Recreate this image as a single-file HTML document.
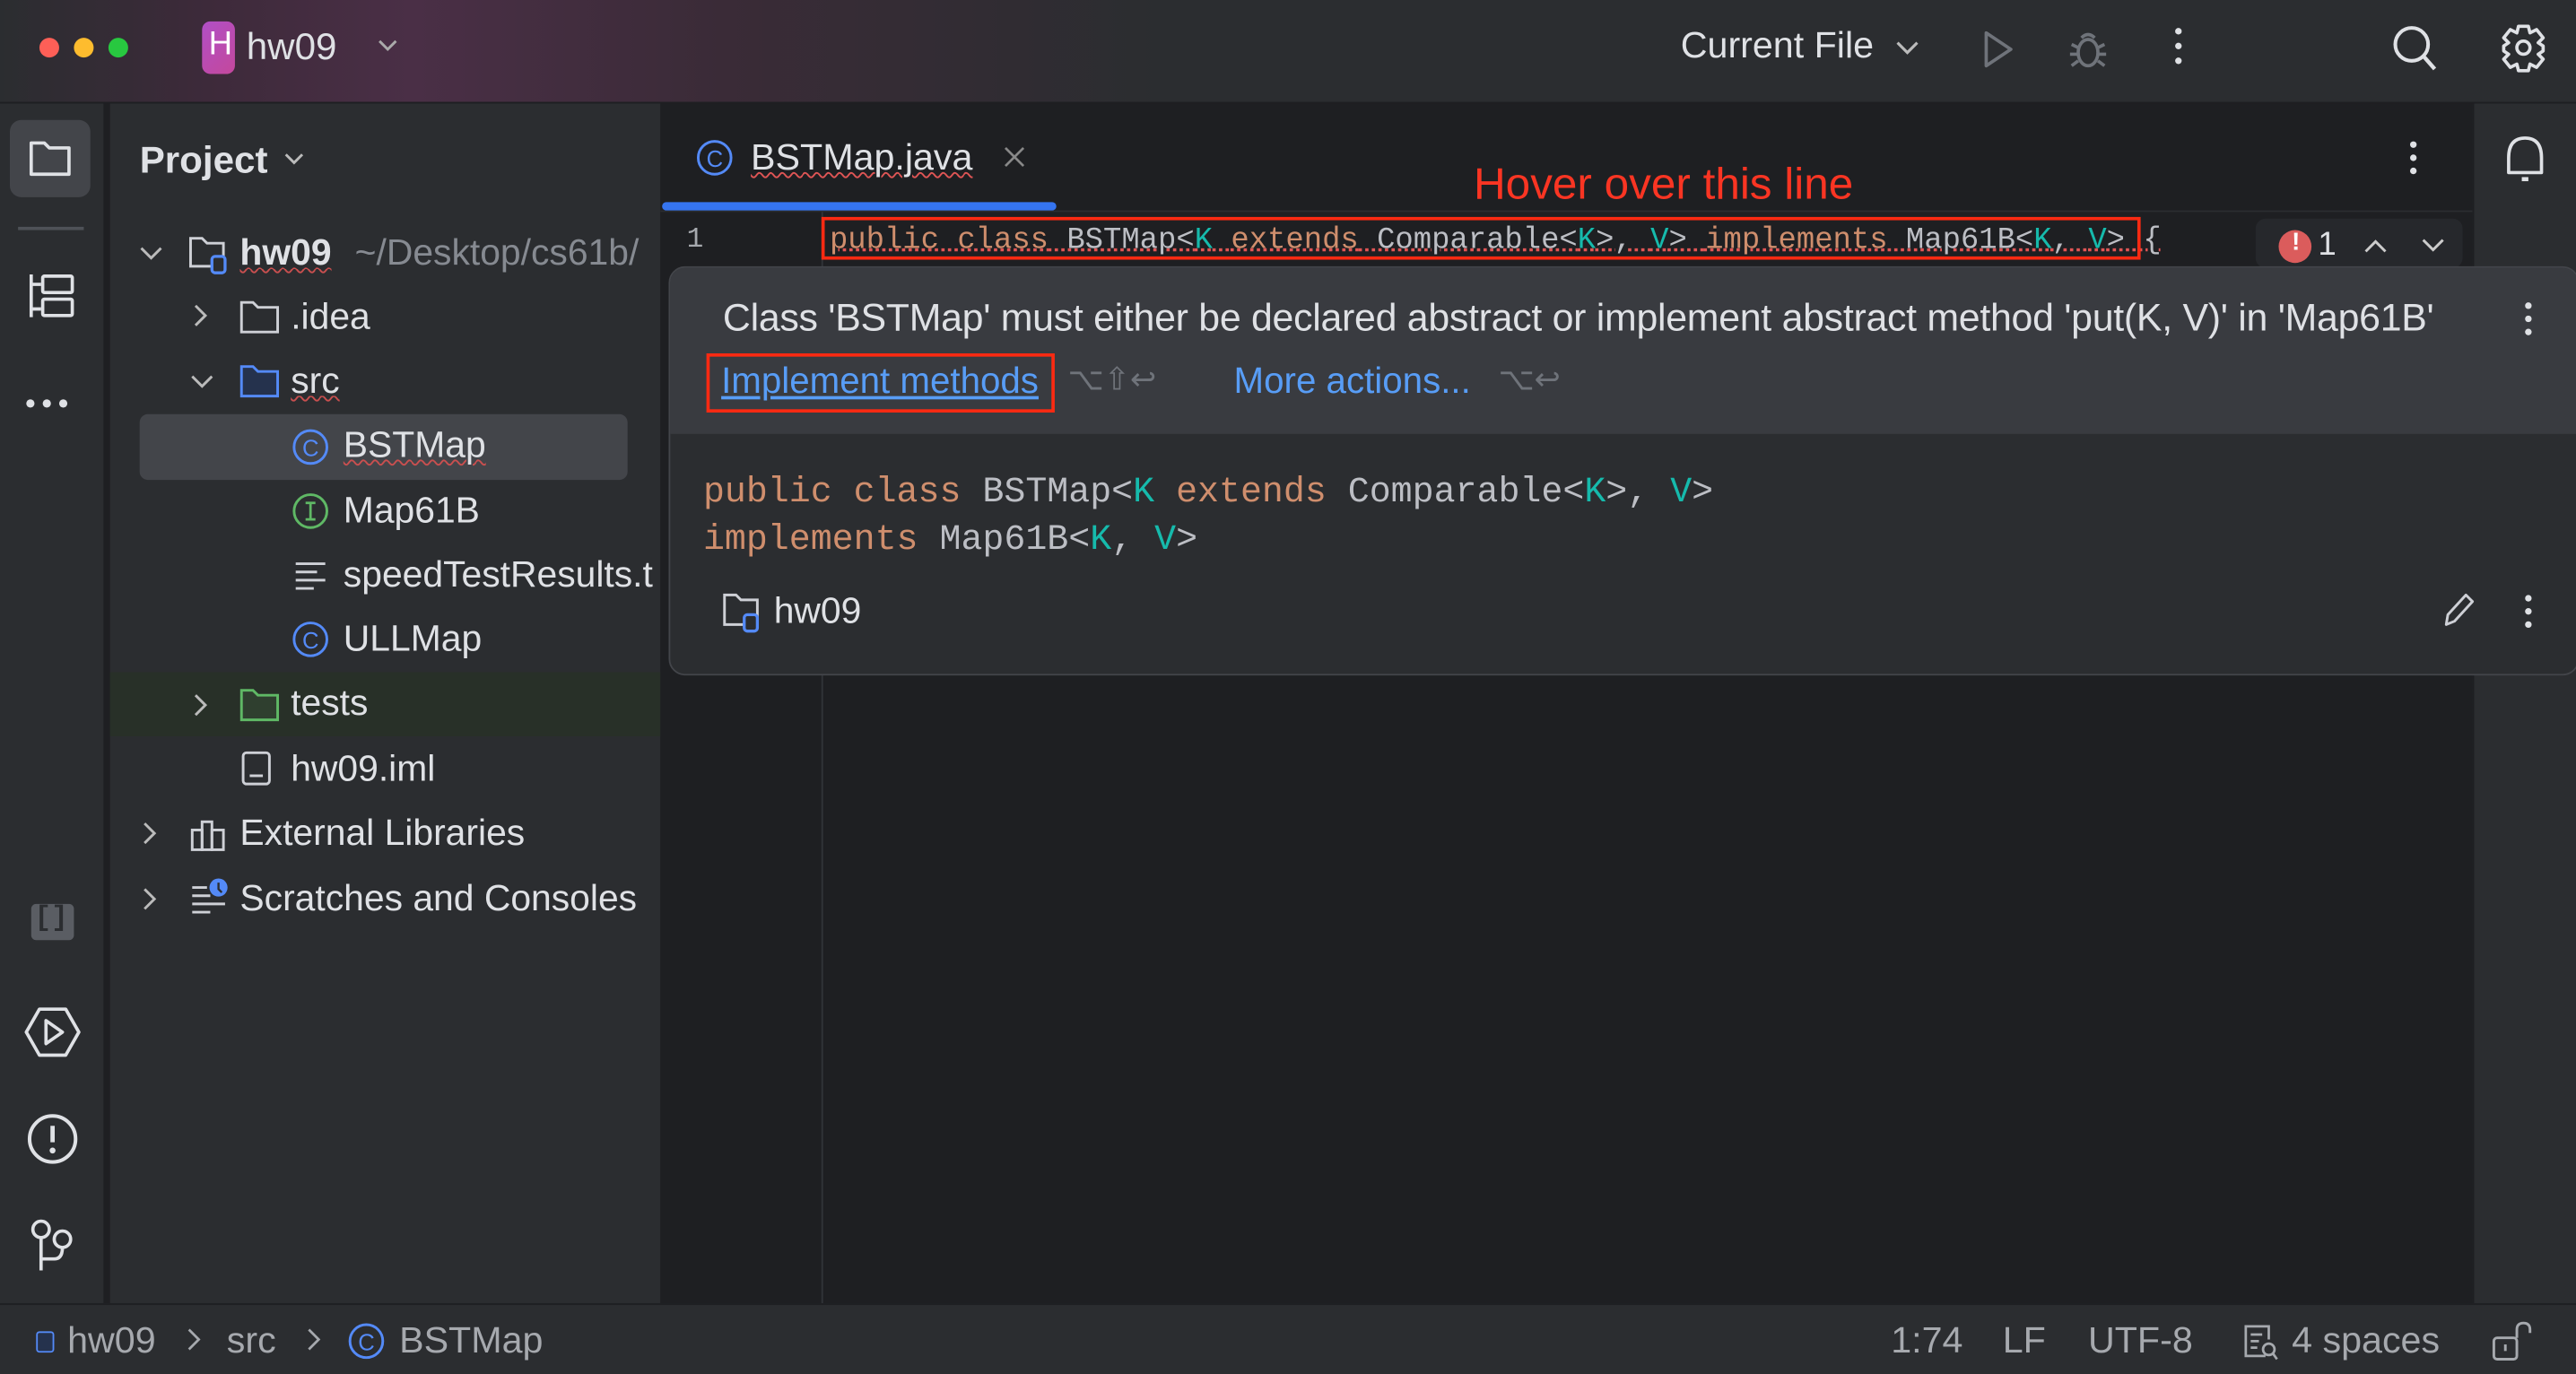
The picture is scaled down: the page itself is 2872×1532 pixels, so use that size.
<!DOCTYPE html>
<html><head><meta charset="utf-8"><style>
*{margin:0;padding:0;box-sizing:border-box}
html,body{width:2872px;height:1532px;overflow:hidden;background:#1e1f22}
#w{position:absolute;left:0;top:0;width:1568px;height:836px;transform:scale(1.83163,1.83254);transform-origin:0 0;font-family:"Liberation Sans",sans-serif;color:#dfe1e5;background:#1e1f22}
.a{position:absolute}
.t{position:absolute;white-space:nowrap}
.m{font-family:"Liberation Mono","DejaVu Sans Mono",monospace}
.kw{color:#cf8e6d}.tp{color:#16baac}
svg{position:absolute;overflow:visible}
.tr{font-size:22.3px}
</style></head><body><div id="w">
<div class="a" style="left:0;top:0;width:1568px;height:62px;background:linear-gradient(90deg,#2b2d30 0,#3d2a3a 8%,#4a2f46 16%,#3a2b37 28%,#2b2d30 45%)"></div>
<div class="a" style="left:0;top:62px;width:1568px;height:1px;background:#1e1f22"></div>
<div class="a" style="left:24px;top:23px;width:12px;height:12px;border-radius:50%;background:#fe5f57"></div>
<div class="a" style="left:45px;top:23px;width:12px;height:12px;border-radius:50%;background:#febc2e"></div>
<div class="a" style="left:66px;top:23px;width:12px;height:12px;border-radius:50%;background:#28c840"></div>
<div class="a" style="left:123px;top:13px;width:20px;height:32px;border-radius:5px;background:linear-gradient(135deg,#b04fc6,#c4489c)"></div>
<div class="t" style="left:127px;top:16px;font-size:20px;color:#fff">H</div>
<div class="t" style="left:150px;top:15px;font-size:23px;color:#dfe1e5">hw09</div>
<svg style="left:230px;top:24px" width="12" height="8"><path d="M1 1 L6 6 L11 1" stroke="#aaa" stroke-width="1.6" fill="none"/></svg>
<div class="t" style="left:1023px;top:15px;font-size:22.5px">Current File</div>
<svg style="left:1154px;top:25px" width="14" height="9"><path d="M1 1 L7 7 L13 1" stroke="#bbb" stroke-width="1.7" fill="none"/></svg>
<svg style="left:1207px;top:18px" width="20" height="24"><path d="M2 2 L17 12 L2 22 Z" stroke="#6f737a" stroke-width="2" fill="none" stroke-linejoin="round"/></svg>
<svg style="left:1258px;top:16px" width="26" height="28"><ellipse cx="13" cy="16" rx="6" ry="8" stroke="#6f737a" stroke-width="2" fill="none"/><path d="M9 7 Q13 3 17 7 M3 11 L7 13 M23 11 L19 13 M2 17 L7 17 M24 17 L19 17 M3 24 L7 21 M23 24 L19 21" stroke="#6f737a" stroke-width="2" fill="none"/></svg>
<div class="a" style="left:1324px;top:17px;width:4px;height:4px;border-radius:50%;background:#dfe1e5;box-shadow:0 9px 0 #dfe1e5,0 18px 0 #dfe1e5"></div>
<svg style="left:1456px;top:15px" width="30" height="30"><circle cx="12" cy="12" r="10" stroke="#dfe1e5" stroke-width="2.2" fill="none"/><path d="M19 19 L26 27" stroke="#dfe1e5" stroke-width="2.4"/></svg>
<svg style="left:1521px;top:14px" width="30" height="30"><circle cx="15" cy="15" r="4" stroke="#dfe1e5" stroke-width="2" fill="none"/><path d="M12 2 h6 l1 4 l4 -2 l4 5 l-3 3 l3 2 v3 l-3 2 l3 3 l-4 5 l-4 -2 l-1 4 h-6 l-1 -4 l-4 2 l-4 -5 l3 -3 l-3 -2 v-3 l3 -2 l-3 -3 l4 -5 l4 2 z" stroke="#dfe1e5" stroke-width="2" fill="none" stroke-linejoin="round"/></svg>

<div class="a" style="left:0;top:63px;width:65px;height:730px;background:#2b2d30;border-right:2px solid #1e1f22"></div>
<div class="a" style="left:6px;top:73px;width:49px;height:47px;border-radius:7px;background:#43454a"></div>
<svg style="left:17px;top:84px" width="28" height="26"><path d="M2 3 h8 l3 3 h12 v16 h-23 z" stroke="#dfe1e5" stroke-width="2" fill="none" stroke-linejoin="round"/></svg>
<div class="a" style="left:11px;top:138px;width:40px;height:2px;background:#4e5157"></div>
<svg style="left:17px;top:165px" width="30" height="30"><path d="M2 2 V28 M2 8 H8 M2 23 H8" stroke="#dfe1e5" stroke-width="2" fill="none"/><rect x="9" y="3" width="18" height="10" rx="1" stroke="#dfe1e5" stroke-width="2" fill="none"/><rect x="9" y="17" width="18" height="10" rx="1" stroke="#dfe1e5" stroke-width="2" fill="none"/></svg>
<div class="a" style="left:16px;top:243px;width:5px;height:5px;border-radius:50%;background:#dfe1e5;box-shadow:10px 0 0 #dfe1e5,20px 0 0 #dfe1e5"></div>
<div class="a" style="left:19px;top:550px;width:26px;height:22px;border-radius:3px;background:#5a5d63"></div>
<div class="t m" style="left:21px;top:550px;font-size:17px;color:#2b2d30;font-weight:bold">[]</div>
<svg style="left:15px;top:612px" width="34" height="32"><path d="M9 2 h16 l8 14 l-8 14 h-16 l-8 -14 z" stroke="#dfe1e5" stroke-width="2" fill="none" stroke-linejoin="round"/><path d="M13 9 L23 16 L13 23 Z" stroke="#dfe1e5" stroke-width="2" fill="none" stroke-linejoin="round"/></svg>
<svg style="left:16px;top:677px" width="32" height="32"><circle cx="16" cy="16" r="14" stroke="#dfe1e5" stroke-width="2.2" fill="none"/><path d="M16 8 V18" stroke="#dfe1e5" stroke-width="2.6"/><circle cx="16" cy="23" r="1.8" fill="#dfe1e5"/></svg>
<svg style="left:17px;top:742px" width="30" height="32"><circle cx="8" cy="6" r="5" stroke="#dfe1e5" stroke-width="2" fill="none"/><circle cx="21" cy="12" r="5" stroke="#dfe1e5" stroke-width="2" fill="none"/><path d="M8 11 V31 M8 24 H16 Q21 24 21 17" stroke="#dfe1e5" stroke-width="2" fill="none"/></svg>

<div class="a" style="left:67px;top:63px;width:335px;height:730px;background:#2b2d30"></div>
<div class="t" style="left:85px;top:84px;font-size:23px;font-weight:bold;color:#dfe1e5">Project</div>
<svg style="left:173px;top:93px" width="12" height="8"><path d="M1 1 L6 6 L11 1" stroke="#bbb" stroke-width="1.6" fill="none"/></svg>
<div class="a" style="left:67px;top:409px;width:335px;height:39px;background:#283028"></div>
<div class="a" style="left:85px;top:252px;width:297px;height:40px;border-radius:5px;background:#43454a"></div>
<svg style="left:85px;top:150px" width="14" height="9"><path d="M1 1 L7 7 L13 1" stroke="#bbb" stroke-width="1.6" fill="none"/></svg>
<svg style="left:118px;top:185px" width="9" height="14"><path d="M1 1 L7 7 L1 13" stroke="#bbb" stroke-width="1.6" fill="none"/></svg>
<svg style="left:116px;top:228px" width="14" height="9"><path d="M1 1 L7 7 L13 1" stroke="#bbb" stroke-width="1.6" fill="none"/></svg>
<svg style="left:118px;top:422px" width="9" height="14"><path d="M1 1 L7 7 L1 13" stroke="#bbb" stroke-width="1.6" fill="none"/></svg>
<svg style="left:87px;top:500px" width="9" height="14"><path d="M1 1 L7 7 L1 13" stroke="#bbb" stroke-width="1.6" fill="none"/></svg>
<svg style="left:87px;top:540px" width="9" height="14"><path d="M1 1 L7 7 L1 13" stroke="#bbb" stroke-width="1.6" fill="none"/></svg>
<svg style="left:115px;top:143px" width="26" height="24"><path d="M1 2 h7 l3 3 h10 v14 h-20 z" stroke="#ced0d6" stroke-width="1.6" fill="none"/><rect x="14" y="13" width="8" height="10" rx="2" fill="#2b2d30" stroke="#548af7" stroke-width="1.8"/></svg>
<div class="t tr" style="left:146px;top:141px;font-weight:bold;color:#dfe1e5;text-decoration:underline wavy #c94f4f;text-decoration-thickness:1px">hw09</div>
<div class="t tr" style="left:216px;top:141px;color:#868a91">~/Desktop/cs61b/</div>
<svg style="left:146px;top:182px" width="26" height="22"><path d="M1 2 h7 l3 3 h12 v15 h-22 z" stroke="#ced0d6" stroke-width="1.6" fill="none"/></svg>
<div class="t tr" style="left:177px;top:180px">.idea</div>
<svg style="left:146px;top:221px" width="26" height="22"><path d="M1 2 h7 l3 3 h12 v15 h-22 z" stroke="#548af7" stroke-width="1.6" fill="#25324d"/></svg>
<div class="t tr" style="left:177px;top:219px;text-decoration:underline wavy #c94f4f;text-decoration-thickness:1px">src</div>
<svg style="left:178px;top:261px" width="24" height="24"><circle cx="11" cy="11" r="10" stroke="#548af7" stroke-width="1.6" fill="none"/><text x="6" y="16.5" font-size="14" fill="#548af7" font-family="Liberation Sans">C</text></svg>
<div class="t tr" style="left:209px;top:258px;text-decoration:underline wavy #c94f4f;text-decoration-thickness:1px">BSTMap</div>
<svg style="left:178px;top:300px" width="24" height="24"><circle cx="11" cy="11" r="10" stroke="#5fb865" stroke-width="1.6" fill="none"/><path d="M8 6 H14 M11 6 V16 M8 16 H14" stroke="#5fb865" stroke-width="1.5"/></svg>
<div class="t tr" style="left:209px;top:298px">Map61B</div>
<svg style="left:179px;top:341px" width="22" height="20"><path d="M1 2 H19 M1 7 H14 M1 12 H19 M1 17 H12" stroke="#ced0d6" stroke-width="1.6"/></svg>
<div class="t tr" style="left:209px;top:337px">speedTestResults.t</div>
<svg style="left:178px;top:378px" width="24" height="24"><circle cx="11" cy="11" r="10" stroke="#548af7" stroke-width="1.6" fill="none"/><text x="6" y="16.5" font-size="14" fill="#548af7" font-family="Liberation Sans">C</text></svg>
<div class="t tr" style="left:209px;top:376px">ULLMap</div>
<svg style="left:146px;top:418px" width="26" height="22"><path d="M1 2 h7 l3 3 h12 v15 h-22 z" stroke="#5fb865" stroke-width="1.6" fill="#2f3f2f"/></svg>
<div class="t tr" style="left:177px;top:415px">tests</div>
<svg style="left:147px;top:457px" width="20" height="22"><rect x="1" y="1" width="16" height="19" rx="2" stroke="#ced0d6" stroke-width="1.6" fill="none"/><path d="M5 15 H13" stroke="#ced0d6" stroke-width="1.6"/></svg>
<div class="t tr" style="left:177px;top:455px">hw09.iml</div>
<svg style="left:116px;top:497px" width="24" height="22"><rect x="1" y="8" width="6" height="12" stroke="#ced0d6" stroke-width="1.6" fill="none"/><rect x="7" y="3" width="6" height="17" stroke="#ced0d6" stroke-width="1.6" fill="none"/><rect x="13" y="8" width="7" height="12" stroke="#ced0d6" stroke-width="1.6" fill="none"/></svg>
<div class="t tr" style="left:146px;top:494px">External Libraries</div>
<svg style="left:116px;top:534px" width="28" height="24"><path d="M1 6 H10 M1 11 H12 M1 16 H21 M1 21 H12" stroke="#ced0d6" stroke-width="1.6"/><circle cx="17" cy="6" r="5.5" fill="#548af7"/><path d="M17 3 V7 L19 9" stroke="#2b2d30" stroke-width="1.3" fill="none"/></svg>
<div class="t tr" style="left:146px;top:534px">Scratches and Consoles</div>

<div class="a" style="left:402px;top:63px;width:1103px;height:730px;background:#1e1f22"></div>
<div class="a" style="left:402px;top:128px;width:1103px;height:1px;background:#2b2d30"></div>
<div class="a" style="left:403px;top:123px;width:240px;height:5px;border-radius:3px;background:#3574f0"></div>
<svg style="left:424px;top:85px" width="24" height="24"><circle cx="11" cy="11" r="10" stroke="#548af7" stroke-width="1.6" fill="none"/><text x="6" y="16.5" font-size="14" fill="#548af7" font-family="Liberation Sans">C</text></svg>
<div class="t" style="left:457px;top:83px;font-size:22.5px;text-decoration:underline wavy #e05555;text-decoration-thickness:1px">BSTMap.java</div>
<svg style="left:611px;top:89px" width="14" height="14"><path d="M1 1 L12 12 M12 1 L1 12" stroke="#888" stroke-width="1.5"/></svg>
<div class="a" style="left:1467px;top:86px;width:4px;height:4px;border-radius:50%;background:#dfe1e5;box-shadow:0 8px 0 #dfe1e5,0 16px 0 #dfe1e5"></div>
<div class="t" style="left:897px;top:97px;font-size:27px;color:#fa3523">Hover over this line</div>
<div class="a" style="left:500px;top:129px;width:1px;height:664px;background:#313438"></div>
<div class="t m" style="left:418px;top:137px;font-size:17px;color:#a6a9ae">1</div>
<div class="t m" style="left:505px;top:136px;font-size:18.5px;color:#bcbec4;text-decoration:underline dotted #e05555"><span class="kw">public class</span> BSTMap&lt;<span class="tp">K</span> <span class="kw">extends</span> Comparable&lt;<span class="tp">K</span>&gt;, <span class="tp">V</span>&gt; <span class="kw">implements</span> Map61B&lt;<span class="tp">K</span>, <span class="tp">V</span>&gt; {</div>
<div class="a" style="left:500px;top:132px;width:803px;height:26px;border:2.5px solid #fa2a12"></div>
<div class="a" style="left:1373px;top:133px;width:126px;height:30px;border-radius:6px;background:#26282c"></div>
<div class="a" style="left:1387px;top:140px;width:20px;height:20px;border-radius:50%;background:#db5c5c"></div>
<div class="t" style="left:1395px;top:139px;font-size:15px;font-weight:bold;color:#fff">!</div>
<div class="t" style="left:1411px;top:138px;font-size:20px;color:#dfe1e5">1</div>
<svg style="left:1439px;top:145px" width="14" height="9"><path d="M1 8 L7 2 L13 8" stroke="#ccc" stroke-width="1.6" fill="none"/></svg>
<svg style="left:1474px;top:145px" width="14" height="9"><path d="M1 1 L7 7 L13 1" stroke="#ccc" stroke-width="1.6" fill="none"/></svg>

<div class="a" style="left:1505px;top:63px;width:63px;height:730px;background:#2b2d30;border-left:1px solid #1e1f22"></div>
<svg style="left:1523px;top:80px" width="30" height="34"><path d="M4 25 V16 Q4 4 14 4 Q24 4 24 16 V25 Z" stroke="#dfe1e5" stroke-width="2" fill="none" stroke-linejoin="round"/><path d="M12 29 H16" stroke="#dfe1e5" stroke-width="2.5"/></svg>

<div class="a" style="left:407px;top:162px;width:1163px;height:249px;border-radius:10px;background:#2b2d30;border:1px solid #43454a;overflow:hidden">
 <div class="a" style="left:0;top:0;width:1163px;height:101px;background:#393b40"></div>
</div>
<div class="t" style="left:440px;top:180px;font-size:23.4px;color:#dfe1e5;letter-spacing:-0.15px">Class 'BSTMap' must either be declared abstract or implement abstract method 'put(K, V)' in 'Map61B'</div>
<div class="a" style="left:1537px;top:184px;width:4px;height:4px;border-radius:50%;background:#dfe1e5;box-shadow:0 8px 0 #dfe1e5,0 16px 0 #dfe1e5"></div>
<div class="t" style="left:439px;top:219px;font-size:22px;color:#589df6;text-decoration:underline">Implement methods</div>
<div class="a" style="left:430px;top:215px;width:212px;height:36px;border:2.5px solid #fa2a12"></div>
<div class="t" style="left:650px;top:220px;font-size:19px;color:#6f737a">⌥⇧↩</div>
<div class="t" style="left:751px;top:219px;font-size:22px;color:#589df6">More actions...</div>
<div class="t" style="left:912px;top:220px;font-size:19px;color:#6f737a">⌥↩</div>
<div class="t m" style="left:428px;top:287px;font-size:21.8px;color:#bcbec4"><span class="kw">public class</span> BSTMap&lt;<span class="tp">K</span> <span class="kw">extends</span> Comparable&lt;<span class="tp">K</span>&gt;, <span class="tp">V</span>&gt;</div>
<div class="t m" style="left:428px;top:316px;font-size:21.8px;color:#bcbec4"><span class="kw">implements</span> Map61B&lt;<span class="tp">K</span>, <span class="tp">V</span>&gt;</div>
<svg style="left:440px;top:360px" width="26" height="26"><path d="M1 2 h7 l3 3 h10 v15 h-20 z" stroke="#ced0d6" stroke-width="1.6" fill="none"/><rect x="13" y="14" width="8" height="10" rx="2" fill="#2b2d30" stroke="#548af7" stroke-width="1.8"/></svg>
<div class="t tr" style="left:471px;top:359px">hw09</div>
<svg style="left:1486px;top:359px" width="22" height="24"><path d="M3 21 L4 15 L15 3 L19 7 L8 19 Z" stroke="#ced0d6" stroke-width="1.6" fill="none" stroke-linejoin="round"/></svg>
<div class="a" style="left:1537px;top:362px;width:4px;height:4px;border-radius:50%;background:#dfe1e5;box-shadow:0 8px 0 #dfe1e5,0 16px 0 #dfe1e5"></div>

<div class="a" style="left:0;top:793px;width:1568px;height:43px;background:#2b2d30;border-top:1px solid #1e1f22"></div>
<div class="a" style="left:22px;top:810px;width:11px;height:13px;border-radius:2px;border:1.6px solid #548af7;background:#25324d"></div>
<div class="t" style="left:41px;top:803px;font-size:22.5px;color:#a6a9ae">hw09</div>
<svg style="left:114px;top:808px" width="9" height="14"><path d="M1 1 L7 7 L1 13" stroke="#a6a9ae" stroke-width="1.5" fill="none"/></svg>
<div class="t" style="left:138px;top:803px;font-size:22.5px;color:#a6a9ae">src</div>
<svg style="left:187px;top:808px" width="9" height="14"><path d="M1 1 L7 7 L1 13" stroke="#a6a9ae" stroke-width="1.5" fill="none"/></svg>
<svg style="left:212px;top:805px" width="24" height="24"><circle cx="11" cy="11" r="10" stroke="#548af7" stroke-width="1.6" fill="none"/><text x="6" y="16.5" font-size="14" fill="#548af7" font-family="Liberation Sans">C</text></svg>
<div class="t" style="left:243px;top:803px;font-size:22.5px;color:#a6a9ae">BSTMap</div>
<div class="t" style="left:1151px;top:803px;font-size:22.5px;color:#a6a9ae">1:74</div>
<div class="t" style="left:1219px;top:803px;font-size:22.5px;color:#a6a9ae">LF</div>
<div class="t" style="left:1271px;top:803px;font-size:22.5px;color:#a6a9ae">UTF-8</div>
<svg style="left:1365px;top:805px" width="24" height="26"><path d="M14 20 H2 V2 H16 V10" stroke="#a6a9ae" stroke-width="1.5" fill="none"/><path d="M5 7 H12 M5 11 H10 M5 15 H9" stroke="#a6a9ae" stroke-width="1.5"/><circle cx="16" cy="16" r="3.5" stroke="#a6a9ae" stroke-width="1.5" fill="none"/><path d="M18.5 18.5 L21 22" stroke="#a6a9ae" stroke-width="1.5"/></svg>
<div class="t" style="left:1395px;top:803px;font-size:22.5px;color:#a6a9ae">4 spaces</div>
<svg style="left:1516px;top:803px" width="26" height="28"><rect x="2" y="11" width="14" height="13" rx="2" stroke="#a6a9ae" stroke-width="1.6" fill="none"/><path d="M9 15 V19" stroke="#a6a9ae" stroke-width="1.6"/><path d="M16 11 V6 Q16 2 20 2 Q24 2 24 6 V8" stroke="#a6a9ae" stroke-width="1.6" fill="none"/></svg>
</div></body></html>
